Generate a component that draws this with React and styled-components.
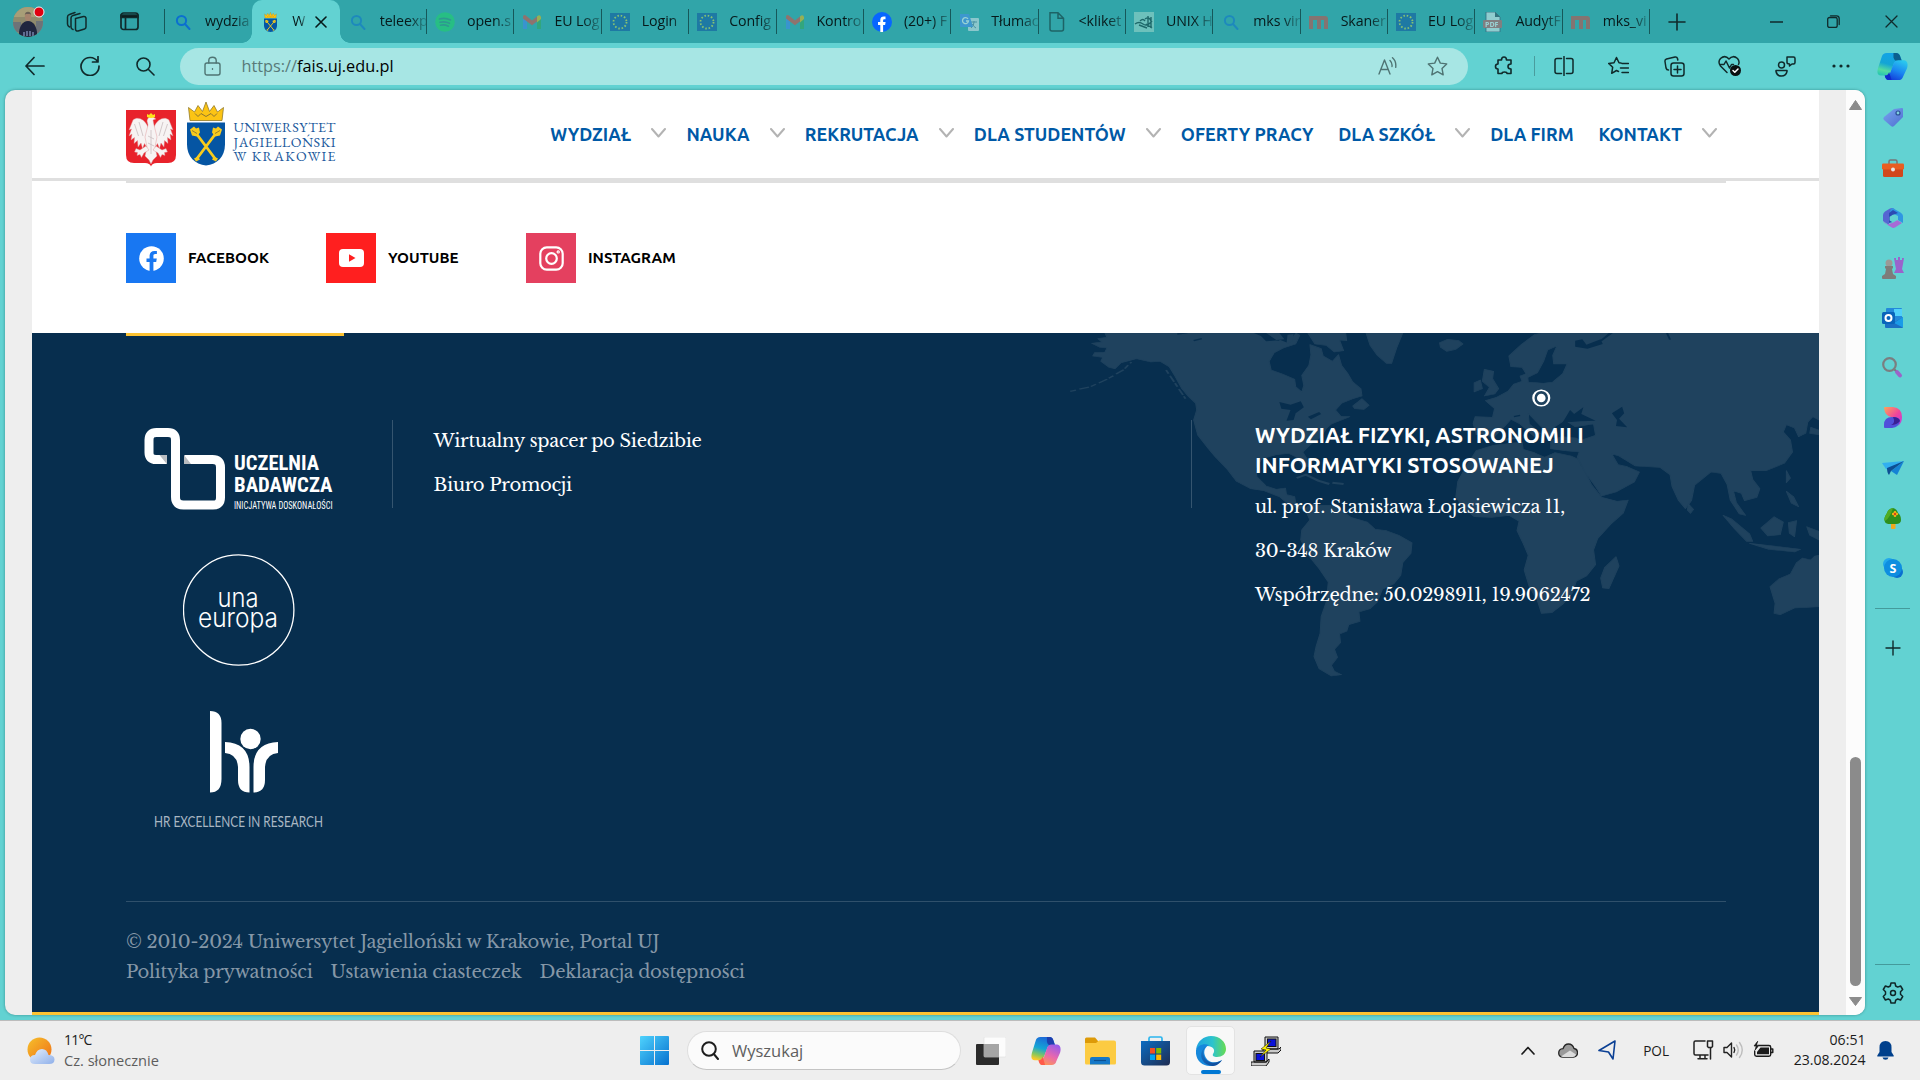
import React from 'react';
import styled, { createGlobalStyle, css } from 'styled-components';

const ui = '"Open Sans", "Noto Sans", sans-serif';
const brand = 'Ubuntu, "Open Sans", "Noto Sans", sans-serif';
const serif = '"Libre Baskerville", "Noto Serif", "Liberation Serif", serif';

const Global = createGlobalStyle`
  * { box-sizing: border-box; }
  body { margin: 0; background: #62d2d2; overflow: hidden; font-family: ${ui}; }
  svg { display: block; flex: none; }
`;

const Screen = styled.div`
  width: 1920px;
  height: 1080px;
  display: flex;
  flex-direction: column;
  overflow: hidden;
  background: #62d2d2;
`;

/* ---------- window title strip ---------- */
const TabStrip = styled.div`
  height: 43px;
  flex: none;
  display: flex;
  background: #31a5a9;
`;
const StripTools = styled.div`
  width: 165px;
  display: flex;
  align-items: center;
  padding-left: 13px;
`;
const StripIcon = styled.div`
  margin-left: ${(p) => p.$gap}px;
`;
const Tabs = styled.div`
  width: 1485px;
  display: flex;
`;
const Tab = styled.div`
  flex: 1 1 0;
  min-width: 0;
  display: flex;
  align-items: center;
  padding-left: 8px;
  position: relative;
  color: #07191a;
  background: ${(p) => (p.$active ? '#62d2d2' : 'transparent')};
  border-radius: 10px 10px 0 0;
  ${(p) =>
    p.$active &&
    css`
      &::before,
      &::after {
        content: '';
        position: absolute;
        bottom: 0;
        width: 10px;
        height: 10px;
      }
      &::before {
        left: -10px;
        background: radial-gradient(circle at 0 0, transparent 9.5px, #62d2d2 10px);
      }
      &::after {
        right: -10px;
        background: radial-gradient(circle at 100% 0, transparent 9.5px, #62d2d2 10px);
      }
    `}
`;
const Fav = styled.div`
  width: 20px;
  height: 20px;
  flex: none;
  display: flex;
  justify-content: center;
  opacity: ${(p) => (p.$asleep ? 0.5 : 1)};
`;
const TabTitle = styled.span`
  flex: 1;
  min-width: 0;
  margin: -2px 0 0 12px;
  font-size: 14.2px;
  line-height: 25px;
  white-space: nowrap;
  letter-spacing: -0.1px;
  mask-image: linear-gradient(to right, #000 60%, rgba(0, 0, 0, 0.2) 100%);
  ${(p) => p.$short && css`flex: none; width: 14px;`}
`;
const TabLine = styled.i`
  width: 1px;
  height: 25px;
  flex: none;
  background: ${(p) => (p.$hidden ? 'transparent' : '#16585a')};
`;
const CloseTab = styled.div`
  margin-left: 8.5px;
`;
const WindowTools = styled.div`
  flex: 1;
  display: flex;
  align-items: center;
  padding-left: 18px;
`;

/* ---------- address bar ---------- */
const Toolbar = styled.div`
  height: 47px;
  flex: none;
  display: flex;
  align-items: center;
  padding: 0 0 1px 7px;
`;
const Slot = styled.div`
  width: ${(p) => p.$w || 55.4}px;
  flex: none;
  display: flex;
  justify-content: center;
  align-items: center;
`;
const Address = styled.div`
  width: 1288px;
  flex: none;
  height: 37px;
  margin: 0 8.5px 0 7px;
  border-radius: 19px;
  background: #a7e6e4;
  display: flex;
  align-items: center;
  padding: 0 20px 0 24px;
`;
const Url = styled.div`
  flex: 1;
  margin: 0 0 0 20.5px;
  font-size: 16.3px;
  color: #000;
  span { color: #587a79; }
`;
const ReadAloud = styled.div`
  margin-right: 30px;
`;
const ToolLine = styled.i`
  width: 1px;
  height: 20px;
  margin: 0 1px 0 2px;
  flex: none;
  background: #4a9c9d;
`;

/* ---------- main area ---------- */
const Main = styled.div`
  height: 930px;
  flex: none;
  display: flex;
  padding-left: 5px;
`;
const Viewport = styled.div`
  width: 1860px;
  height: 925px;
  display: flex;
  border-radius: 10px;
  overflow: hidden;
  background: #eee;
  box-shadow: 0 0 3px rgba(0, 60, 60, 0.45);
`;
const Site = styled.div`
  width: 1787px;
  margin: 0 27px;
  display: flex;
  flex-direction: column;
  background: #fff;
`;
const ScrollTrack = styled.div`
  width: 19px;
  background: #fcfcfc;
  display: flex;
  flex-direction: column;
  align-items: center;
  padding: 10px 0 9px;
`;
const ScrollThumb = styled.div`
  width: 11px;
  height: 229px;
  margin: 647px 0 11px;
  border-radius: 6px;
  background: #8b8b8b;
`;

const SiteHeader = styled.header`
  height: 91px;
  flex: none;
  display: flex;
  justify-content: space-between;
  padding: 0 102px 0 94px;
  border-bottom: 3px solid #dfdfdf;
`;
const SiteLogo = styled.div`
  padding-top: 10px;
`;
const Nav = styled.nav`
  display: flex;
  align-items: center;
  gap: 20.2px;
  padding-bottom: 1px;
`;
const NavItem = styled.a`
  display: flex;
  align-items: center;
  gap: 20px;
  padding-right: ${(p) => (p.$plain ? 4.5 : 0)}px;
  font: 700 17.93px/24px ${brand};
  color: #0059a6;
  svg { margin-top: -2px; }
`;
const Socials = styled.section`
  height: 152px;
  flex: none;
  width: 1600px;
  margin-left: 94px;
  border-top: 2px solid #dfdfdf;
  display: flex;
  padding-top: 50px;
`;
const Social = styled.a`
  width: 200px;
  height: 50px;
  display: flex;
  align-items: center;
  gap: 12px;
  font: 700 15.2px/20px ${brand};
  color: #000;
`;
const SocialTile = styled.span`
  width: 50px;
  height: 50px;
  display: flex;
  align-items: center;
  justify-content: center;
  background: ${(p) => p.$bg};
`;

const Footer = styled.footer`
  flex: 1;
  position: relative;
  background: #072e4e;
  border-bottom: 3px solid #fcc332;
`;
const MapLayer = styled.div`
  position: absolute;
  right: 0;
  top: 0;
`;
const Accent = styled.div`
  width: 218px;
  height: 3px;
  margin-left: 94px;
  background: #fcc332;
`;
const FooterGrid = styled.div`
  position: relative;
  height: 566px;
  margin: 0 93px 0 94px;
  padding-top: 84px;
  display: grid;
  grid-template-columns: 266px 799px 1fr;
  align-items: start;
  border-bottom: 1px solid #2f506b;
`;
const Badges = styled.div`
  width: 225px;
  padding-top: 8px;
  display: flex;
  flex-direction: column;
  align-items: center;
  gap: 44px;
`;
const FooterColumn = styled.div`
  height: 88px;
  border-left: 1px solid #35556f;
  padding: ${(p) => p.$pad};
`;
const FooterLine = styled.p`
  margin: 0 0 14px;
  font: 400 18px/30px ${serif};
  letter-spacing: -0.27px;
  white-space: nowrap;
  color: #fff;
`;
const FooterTitle = styled.h3`
  margin: 0 0 12px;
  font: 700 21.65px/30px ${brand};
  white-space: nowrap;
  color: #fff;
`;
const Legal = styled.div`
  position: relative;
  padding: 25px 0 0 94px;
`;
const LegalRow = styled.div`
  display: flex;
  gap: 18px;
`;
const LegalText = styled.span`
  font: 400 18px/30px ${serif};
  letter-spacing: -0.28px;
  white-space: nowrap;
  color: #8597a7;
`;

/* ---------- edge sidebar ---------- */
const SideBar = styled.aside`
  width: 55px;
  height: 930px;
  display: flex;
  flex-direction: column;
  align-items: center;
  padding: 3px 0 16px;
`;
const SideSlot = styled.div`
  height: 50px;
  display: flex;
  align-items: center;
`;
const SideLine = styled.i`
  width: 35px;
  height: 1px;
  margin: ${(p) => p.$m};
  background: #449a9b;
`;

/* ---------- taskbar ---------- */
const TaskBar = styled.div`
  height: 60px;
  flex: none;
  display: flex;
  align-items: center;
  background: #eee;
  border-top: 1px solid #bcbcbc;
`;
const Weather = styled.div`
  width: 640px;
  padding: 0 0 0 27px;
  display: flex;
  align-items: center;
  gap: 9px;
`;
const WeatherText = styled.div`
  margin-top: -2px;
  font-size: 14.6px;
  line-height: 20px;
  color: #5d5d5d;
  b { display: block; font-weight: 400; font-size: 14px; letter-spacing: -0.8px; color: #1b1b1b; }
`;
const SearchPill = styled.div`
  width: 274px;
  height: 39px;
  margin: 0 2px 0 18px;
  padding-left: 13px;
  display: flex;
  align-items: center;
  gap: 13px;
  border-radius: 20px;
  border: 1px solid #dedede;
  border-bottom-color: #c4c4c4;
  background: #fbfbfb;
  font-size: 16.5px;
  color: #5f5f5f;
`;
const TaskSlot = styled.div`
  width: 55px;
  height: 59px;
  display: flex;
  align-items: center;
  justify-content: center;
`;
const TaskTile = styled.div`
  width: 49px;
  height: 49px;
  padding-top: 9px;
  display: flex;
  flex-direction: column;
  align-items: center;
  justify-content: space-between;
  border-radius: 5px;
  border: 1px solid #e3e3e3;
  background: #f8f8f8;
`;
const TaskMark = styled.i`
  width: 20px;
  height: 4px;
  border-radius: 2px;
  background: #0078d4;
`;
const Tray = styled.div`
  margin-left: auto;
  padding-right: 26px;
  display: flex;
  align-items: center;
`;
const TrayItem = styled.div`
  margin: -1px 0 0 ${(p) => p.$gap}px;
  font-size: 13.6px;
  color: #1b1b1b;
`;
const Clock = styled.div`
  margin: -2px 0 0 20px;
  width: 72px;
  text-align: right;
  font-size: 14.1px;
  line-height: 20px;
  color: #1b1b1b;
`;

/* ---------- generic line icon ---------- */
const Ico = ({ w = 20, h = w, vb = `0 0 ${w} ${h}`, sw = 1.4, c = '#102a2b', children }) => (
  <svg width={w} height={h} viewBox={vb} fill="none" stroke={c} strokeWidth={sw} strokeLinecap="round" strokeLinejoin="round">
    {children}
  </svg>
);

const Avatar = () => (
  <svg width="32" height="32" viewBox="0 0 32 32">
    <defs><clipPath id="av"><circle cx="15" cy="16" r="15" /></clipPath></defs>
    <g clipPath="url(#av)">
      <rect width="32" height="32" fill="#8f8a6d" />
      <rect width="32" height="11" fill="#a79e78" />
      <path d="M0 16h8v10H0zM23 15h9v12h-9z" fill="#6d7378" />
      <path d="M6 32c-1-10 3-17 9-17s10 7 9 17z" fill="#20263f" />
      <ellipse cx="15" cy="10.500" rx="3.200" ry="4.600" fill="#a5836d" />
      <path d="M11.800 9c0-4.500 6.400-4.500 6.400 0l-1-1h-4.400z" fill="#6b6056" />
      <path d="M11 26v4M14 25v5M17 25v5M20 26v4" stroke="#8d9cc8" strokeWidth="1.200" fill="none" />
    </g>
    <circle cx="26" cy="6" r="5" fill="#e00010" stroke="#e8f4f4" strokeWidth="1" />
  </svg>
);

const CrestArt = () => (
  <g>
    <path d="M3 19L1.500 6l6 4.500L11 4l4.500 6L19 .5 22.500 10 27 4l3.500 6.500 6-4.500L35 19z" fill="#fcc414" stroke="#927a2a" strokeWidth=".8" />
    <path d="M8 12l3 3 3-3 5 3 5-3 3 3 3-3" fill="none" stroke="#8e7630" strokeWidth="1" />
    <path d="M0 21h38v22c0 12-8 20-19 21C8 63 0 55 0 43z" fill="#0555a3" />
    <path d="M10 33l18 24M28 33L10 57" stroke="#f8cb1c" strokeWidth="2.800" />
    <path d="M3 28l4-3 2 2 3-1 1 5-3 4-5-1zM35 28l-4-3-2 2-3-1-1 5 3 4 5-1zM7 57l4-2 2 3-4 2zM31 57l-4-2-2 3 4 2z" fill="#f8cb1c" />
    <path d="M5 29l5 3M33 29l-5 3" stroke="#8e7630" strokeWidth=".9" />
  </g>
);
const Crest = ({ w, h }) => (
  <svg width={w} height={h} viewBox="0 0 38 64" preserveAspectRatio="none"><CrestArt /></svg>
);

const UniversityLogo = () => (
  <svg width="212" height="68" viewBox="0 0 212 68">
    <path d="M0 10h50v45q0 8-8 8h-11q-5 0-6 3.500Q24 63 19 63H8q-8 0-8-8z" fill="#e8222b" />
    <g fill="#f7f3f3" stroke="#dc8a8e" strokeWidth=".4">
      <path d="M22 27C18 18 11 16.500 7 20L3 30l2.500-1L3 36l3-2-1 6 3.500-2.500-.5 6 3.500-3L12 47l3-4 1.500 5.500 2-5 2 3.500 2.500-6zM28 27c4-9 11-10.500 15-7l4 10-2.500-1 2.500 7-3-2 1 6-3.500-2.500.5 6-3.500-3L38 47l-3-4-1.500 5.500-2-5-2 3.500-2.500-6z" />
      <path d="M21 21q1-5 6-4l3 2-3 1 1 5 3 12-2 10 2 9-4 4-2 4-2-4-4-4 2-9-2-10 3-12z" />
      <path d="M20 46l-6 4-4-1.500-1.500 3.500 3 .5-.5 3 3-1 1.500 3 2.500-4.500 5-3zM30 46l6 4 4-1.500 1.500 3.500-3 .5.500 3-3-1-1.500 3-2.500-4.500-5-3z" />
    </g>
    <path d="M21 17v-3l2 1 2-2 2 2 2-1v3q-4 2-8 0z" fill="#fde21b" />
    <path d="M8.500 24l4 12M13 22l4 14M41.500 24l-4 12M37 22l-4 14M25 30v24M22 36l6 3M22 43l6 3" stroke="#c9bcbf" strokeWidth=".8" fill="none" />
    <g transform="translate(61 1.500)"><CrestArt /></g>
    <g fill="#21599c" fontFamily='"EB Garamond", "Liberation Serif", serif' fontSize="14">
      <text x="107.500" y="31.700" textLength="102" lengthAdjust="spacing">UNIWERSYTET</text>
      <text x="107.500" y="46.700" textLength="102" lengthAdjust="spacing">JAGIELLOŃSKI</text>
      <text x="107.500" y="61" textLength="102" lengthAdjust="spacing">W KRAKOWIE</text>
    </g>
  </svg>
);

/* ---------- favicons ---------- */
const glyphs = {
  search: <g fill="none" stroke="#0b6fd0" strokeWidth="2"><circle cx="8.500" cy="8.500" r="4.600" /><path d="M12 12l4.500 5" strokeLinecap="round" /></g>,
  spotify: <g><circle cx="10" cy="10" r="9.800" fill="#1ed760" /><path d="M4.500 7q6-1.600 11 1M5 10.300q5-1.300 9.500 1M5.500 13.200q4-1 8 1" fill="none" stroke="#2b8f78" strokeWidth="1.600" strokeLinecap="round" /></g>,
  gmail: <g><path d="M1 4v13h4V9z" fill="#4285f4" /><path d="M19 4v13h-4V9z" fill="#34a853" /><path d="M1 4.500Q2 2 4.500 4L10 8.500 15.500 4v5L10 13.300 1 6.500z" fill="#ea4335" /><path d="M15 4.500Q18 2 19 5v2l-4 3.500z" fill="#fbbc04" /></g>,
  eu: <g><rect y="1" width="20" height="18" fill="#0c4fa0" /><circle cx="10" cy="10" r="6.500" fill="none" stroke="#dce03c" strokeWidth="1.800" strokeDasharray="1.500 1.900" /></g>,
  facebook: <g><circle cx="10" cy="10" r="10" fill="#0866ff" /><path d="M8.300 20v-7H6v-3h2.300V8c0-3 2-4 5.200-3.400v2.600c-1.800-.2-2.400.2-2.400 1.400V10h2.500l-.5 3h-2v7z" fill="#fff" /></g>,
  translate: <g><rect x="9" y="6" width="11" height="13" rx="1" fill="#e4eaf0" /><path d="M12 10h6M15 9v1q0 4-3 6M13 12q2 3 4 4" stroke="#62809b" fill="none" /><path d="M1 2h9l4 13H2q-1 0-1-1z" fill="#4a8af4" /><path d="M9 7a3 3 0 1 0 .5 2H7" stroke="#fff" strokeWidth="1.300" fill="none" /></g>,
  file: <path d="M3 .8h8l5.500 5.500v10.700q0 2-2 2H5q-2 0-2-2zM11 .8v5.500h5.500" fill="none" stroke="#0b2425" strokeWidth="1.500" />,
  unix: <g><rect width="20" height="20" fill="#a9ddd0" /><path d="M1 12q4-3 8 0t9-3M6 9q3-3 5 0M11 7q4-3 6 2M12 12l6 4M5 13l8 3M14 4v11M17 5v11" stroke="#0b2d2c" strokeWidth="1.400" fill="none" /></g>,
  mks: <path d="M0 17V4h16q3 0 3 3v10h-4V8h-3v9H8V8H4v9z" fill="#d6453a" />,
  pdf: <g><path d="M3 0h9l5 5v15H3z" fill="#eef6f5" stroke="#335" strokeWidth=".8" /><path d="M12 0v5h5z" fill="#345" /><rect x="0" y="8" width="19" height="8" rx="1" fill="#d05a5a" /><text x="2" y="14.500" fontFamily={ui} fontSize="7" fontWeight="700" fill="#fff">PDF</text></g>,
};
const Favicon = ({ kind }) =>
  kind === 'uj' ? <Crest w={13} h={20} /> : <svg width="20" height="20" viewBox="0 0 20 20">{glyphs[kind]}</svg>;

const tabs = [
  ['search', 'wydzia'], ['uj', 'W'], ['search', 'teleexp'], ['spotify', 'open.s'], ['gmail', 'EU Log'],
  ['eu', 'Login'], ['eu', 'Config'], ['gmail', 'Kontro'], ['facebook', '(20+) F'], ['translate', 'Tłumac'],
  ['file', '<kliket'], ['unix', 'UNIX H'], ['search', 'mks vir'], ['mks', 'Skaner'], ['eu', 'EU Log'],
  ['pdf', 'AudytF'], ['mks', 'mks_vi'],
];

/* ---------- copilot ribbons ---------- */
const Copilot = ({ id, w, h, warm }) => (
  <svg width={w} height={h} viewBox="0 0 32 30" preserveAspectRatio="none">
    <defs>
      <linearGradient id={`${id}a`} x1=".6" y1="0" x2=".3" y2="1">
        <stop offset="0" stopColor={warm ? '#1d66d8' : '#13a3e8'} /><stop offset=".5" stopColor="#14a5d5" /><stop offset=".8" stopColor={warm ? '#8cc85a' : '#54dba0'} /><stop offset="1" stopColor={warm ? '#ffc928' : '#2bc8b0'} />
      </linearGradient>
      <linearGradient id={`${id}b`} x1=".7" y1="0" x2=".2" y2="1">
        <stop offset="0" stopColor={warm ? '#9a5be8' : '#2ac7ee'} /><stop offset=".5" stopColor={warm ? '#e868ae' : '#1a86f2'} /><stop offset="1" stopColor={warm ? '#ff9a4d' : '#1236d6'} />
      </linearGradient>
    </defs>
    <path d="M10 0h10q3 0 4 4l2 5h-5q-3 0-4 4l-3 8q-2 4-5 4H4q-5 0-3-8L5 4q1-4 5-4z" fill={`url(#${id}a)`} />
    <path d="M17 0h3q3 0 4 4l1.500 5H21q-3 0-4-4z" fill={warm ? '#1d3fae' : '#0b5f8e'} />
    <path d="M22 30H12q-3 0-4-5h3q2-1 3-4l3-9q1-4 5-4h6q5 1 3 9l-4 9q-1 4-5 4z" fill={`url(#${id}b)`} />
    <path d="M12.500 21q-1 4-4.500 4 1 5 4 5h3z" fill={warm ? '#ff5a4a' : '#0f2bcc'} />
  </svg>
);

/* ---------- sidebar pictures ---------- */
const side = {
  tag: <g><defs><linearGradient id="tg" x1="0" x2="1" y2="1"><stop stopColor="#78a4f0" /><stop offset="1" stopColor="#4f6fd0" /></linearGradient></defs><path d="M12 2l8-1q1 0 1 1v8l-9 9q-1.500 1.500-3 0L2 13q-1.500-1.500 0-3z" fill="url(#tg)" /><circle cx="16" cy="6" r="2" fill="#7fd0dd" stroke="#2c4f95" strokeWidth="1.200" /></g>,
  toolbox: <g><path d="M7 7V4.500Q7 3 8.500 3h5Q15 3 15 4.500V7" fill="none" stroke="#747678" strokeWidth="1.500" /><path d="M1 12h20v6.500q0 1.500-1.500 1.500h-17Q1 20 1 18.500z" fill="#d1471c" /><rect x="0" y="6.500" width="22" height="6" rx="1.200" fill="#e85e22" /><circle cx="11" cy="12.500" r="2" fill="#e9e4e4" /></g>,
  m365: <g><path d="M8 1.500L3 4.500Q1 6 1 8v6l6 4V8l2-4 4-1.500Q11 0 8 1.500z" fill="#5566d2" /><path d="M10.500 1l8 4.500Q21 7 21 9v7l-5-3V9l-8-4q0-3 2.500-4z" fill="#2f96e2" /><path d="M1 14q1 2 3 3l5 3q2 1.500 4 .5l7-4.500-5-3-5 3-5 1.500z" fill="#a86ad6" /><path d="M7 6v10l3.500-1V8l5.500-2-5-3z" fill="#2b4bb4" /><path d="M11 7.800l3.600 2v3.600L11 15.400l-3.400-2V9.800z" fill="#62d2d2" /></g>,
  chess: <g><path d="M12 1h2v2h2V0h2v3h2V1h2l-1 6-1 5 2 4H12l2-4-1-5z" fill="#9a63cc" /><circle cx="7" cy="6" r="3.500" fill="#9b9996" /><path d="M3 9h8v2l-1 1 1 5 3 2v2q0 1-1 1H1q-1 0-1-1v-2l3-2 1-5-1-1z" fill="#7e7c7a" /></g>,
  outlook: <g><rect x="4" y="1" width="16" height="14" rx="1" fill="#2389da" /><path d="M12 2h8v7h-8z" fill="#50d0fa" /><path d="M3 12l8 4 10-6v10q0 1-1 1H4q-1 0-1-1z" fill="#1a6fc4" /><path d="M12 16l9 4.500V10z" fill="#1a9be8" /><rect x="0" y="5" width="13" height="12" rx="1.500" fill="#0964bb" /><circle cx="6.500" cy="11" r="3" fill="none" stroke="#fff" strokeWidth="2" /></g>,
  search: <g><circle cx="7.500" cy="7.500" r="6.300" fill="none" stroke="#7b7e80" strokeWidth="2.200" /><path d="M12.500 12.500l2 2" stroke="#777" strokeWidth="2" /><path d="M15 15l3 3.500" stroke="#9a64c8" strokeWidth="4" strokeLinecap="round" /></g>,
  designer: <g><defs><linearGradient id="dz" x1="0" x2="1" y2="1"><stop stopColor="#ffa557" /><stop offset=".55" stopColor="#f0449c" /><stop offset="1" stopColor="#b83be8" /></linearGradient></defs><path d="M2 1q0-1 1-1h8q9 1 9 10 0 6-4 9 2-5-2-8-2-1-5-1-6-1-7-9z" fill="url(#dz)" /><path d="M2 18q0-8 8-8t8 4q-1 6-8 7H3q-1 0-1-1z" fill="#5050da" /><path d="M11 10q6 0 7 4-3 4-9 4 5-2 2-8z" fill="#3b1f94" /></g>,
  send: <g><path d="M0 6l22-2-14 9-4-1z" fill="#32aff0" /><path d="M22 4l-7 14-6-4z" fill="#1583d5" /><path d="M5 11l17-7L9 14l-2 4q-2-2-2-7z" fill="#0d4f94" /></g>,
  tree: <g><rect x="9" y="16" width="4.500" height="6" rx="1" fill="#f3a81c" /><path d="M11 1Q6 2 5 6q-4 6-2 9 1 2 5 2h6q5 0 5-4 0-5-3-7-1-4-5-5z" fill="#2e8f1c" /><path d="M11 1Q6 2 5 6q-4 6-2 8 5-3 8-13z" fill="#51ac22" /><g fill="#f7b416"><circle cx="13" cy="5.200" r="1.300" /><circle cx="13" cy="8.800" r="1.300" /><circle cx="11.200" cy="7" r="1.300" /><circle cx="14.800" cy="7" r="1.300" /></g><circle cx="13" cy="7" r="1.200" fill="#d8431a" /></g>,
  skype: <g><circle cx="7" cy="7" r="6" fill="#21a8ec" /><circle cx="15" cy="15" r="6" fill="#0a6fd0" /><circle cx="11" cy="11" r="9" fill="#0e8ee0" /><text x="11" y="15.500" textAnchor="middle" fontFamily={ui} fontWeight="700" fontSize="12.500" fill="#fff">S</text></g>,
};

const Gear = () => (
  <Ico w={22} vb="0 0 22 22" c="#0f2728" sw={1.5}>
    <path d="M9 1h4l.7 3 2 1.100L18.600 4l2.100 3.500L18.500 9.700v2.600l2.200 2.200L18.600 18l-2.900-1-2 1.200L13 21H9l-.7-2.800-2-1.200-2.900 1-2.100-3.500 2.200-2.200V9.700L1.300 7.500 3.400 4l2.900 1 2-1z" />
    <circle cx="11" cy="11" r="2.500" />
  </Ico>
);

/* ---------- world map ---------- */
const WorldMap = () => (
  <svg width="759" height="357" viewBox="0 39 1488 1071" preserveAspectRatio="none">
    <g fill="#1f425e" stroke="#1f425e" strokeWidth="2" strokeLinejoin="round">
      <path d="M88 39L92 52 74 56 82 66 62 70 78 82 92 84 88 96 68 98 64 108 84 112 80 124 96 142 108 146 120 128 150 116 178 126 196 124 214 140 226 170 238 204 252 230 266 250 268 270 262 300 270 345 290 384 304 410 328 448 346 484 374 506 400 512 430 530 444 548 468 566 480 562 462 548 460 530 444 524 442 504 424 508 404 498 386 470 384 444 396 416 424 404 448 400 464 412 474 436 488 440 484 416 476 396 492 372 512 350 522 326 532 312 552 300 568 290 550 288 540 270 552 250 574 236 592 228 590 206 574 186 564 160 552 136 546 104 534 124 516 108 512 86 490 74 492 104 488 136 474 166 478 196 474 216 462 200 460 178 436 162 414 150 410 124 420 98 438 84 462 72 470 46 462 39z" />
      <path d="M486 39L560 39 562 62 548 60 556 92 538 96 522 76 500 72zM600 39L672 39 660 84 650 130 640 130 622 106 608 76zM744 68L760 58 782 62 790 72 776 88 758 94 746 82zM574 258L592 236 606 256 596 268 578 266z" />
      <path d="M476 572L492 552 510 556 530 556 548 566 570 592 602 606 618 628 640 632 664 646 690 668 688 700 672 728 668 766 654 792 632 808 622 846 608 866 586 876 588 904 566 914 562 934 548 942 550 968 538 988 544 1012 532 1036 538 1054 552 1064 532 1068 508 1046 498 1010 502 980 510 940 512 890 522 846 526 786 508 746 490 712 472 660 474 630 490 600 484 580z" />
      <path d="M816 392L850 376 906 366 908 388 930 398 950 412 970 398 1002 408 1016 418 1030 456 1042 494 1062 532 1092 544 1114 540 1104 580 1080 612 1054 656 1046 690 1050 734 1032 768 1012 784 1004 820 986 852 964 878 944 880 936 842 920 800 910 750 918 706 908 670 896 632 900 604 880 586 846 592 812 590 790 562 776 530 780 484 796 440z" />
      <path d="M1090 710L1096 738 1076 806 1064 804 1060 774 1068 742z" />
      <path d="M816 344L810 310 814 290 848 292 852 266 834 242 856 232 878 214 890 192 906 184 902 168 916 160 918 186 948 190 966 186 986 160 994 132 968 132 966 106 974 78 956 90 948 124 936 158 918 172 906 142 884 140 880 108 904 74 930 44 944 39 1488 39 1488 300 1476 290 1466 306 1462 340 1448 350 1440 324 1424 314 1418 336 1432 360 1436 396 1420 430 1384 452 1354 452 1358 478 1372 506 1366 532 1342 542 1336 520 1320 512 1326 548 1344 586 1332 582 1314 540 1308 494 1296 460 1276 456 1244 496 1238 542 1226 566 1212 540 1200 500 1196 464 1176 442 1128 438 1096 408 1082 402 1094 434 1112 440 1136 456 1126 486 1090 516 1062 528 1050 500 1030 458 1014 412 1018 396 990 392 962 386 962 362 984 350 1012 354 1020 362 1050 346 1046 312 1010 320 990 300 970 320 972 352 958 350 946 324 918 280 920 312 942 340 930 350 902 312 884 298 872 318 852 350z" />
      <path d="M832 148L850 154 848 176 860 206 852 222 832 228 842 202 828 184zM812 188L824 180 828 206 812 216zM1392 800L1410 776 1432 762 1444 728 1456 714 1472 720 1480 708 1488 706V860L1464 862 1440 864 1412 884 1400 880 1402 850zM1300 586L1316 596 1352 642 1358 664 1346 664 1322 626zM1352 670L1400 678 1452 688 1440 696 1390 688zM1374 624L1400 590 1418 606 1412 644 1388 648zM1428 608L1444 602 1440 650 1430 640zM1464 620L1488 634V660L1470 646zM1424 452L1432 474 1424 488zM1424 514L1438 530 1448 560 1434 550zM1472 322L1488 330V344L1470 340zM1232 552L1242 568 1236 580 1230 570z" />
    </g>
    <path d="M20 214L60 200 92 178 124 150 140 126M208 150L246 236" fill="none" stroke="#1f425e" strokeWidth="4" strokeDasharray="12 7 20 4" />
    <path d="M464 474L482 464 506 482 528 492M534 488L556 492M862 362L900 352" fill="none" stroke="#1f425e" strokeWidth="6" />
    <g fill="#072e4e">
      <path d="M986 306L1000 270 1008 282 1026 262 1022 282 1050 302 1020 304 1002 306zM1082 280L1102 260 1106 280 1096 296 1112 322 1090 318 1092 300zM430 246L452 254 472 244 478 262 462 280 458 300 444 302 452 270 434 266zM486 290L508 276 512 282 492 298zM1010 62L1024 58 1032 74 1060 58 1064 72 1034 86 1010 80zM1076 39L1084 39 1062 64 1052 70zM380 39L462 39 446 68 432 60 404 64 394 48z" />
      <path d="M262 62l16-6M230 42l20-4M1190 39l6 20M410 54l20 6M890 290l12-4" stroke="#072e4e" strokeWidth="4" />
    </g>
    <path d="M404 39L430 39 440 58 424 60zM446 44L458 42 456 64 444 72z" fill="#1f425e" />
    <ellipse cx="943.500" cy="234" rx="15.500" ry="23.500" fill="#1f425e" stroke="#fff" strokeWidth="4.500" />
    <ellipse cx="943.500" cy="234" rx="8.500" ry="13" fill="#fff" />
  </svg>
);

/* ---------- footer badges ---------- */
const ResearchBadge = () => (
  <svg width="189" height="82" viewBox="0 0 189 82">
    <path d="M22.800 31.500H12q-7 0-7-7V12q0-7.500 7.500-7.500h11.500q7.500 0 7.500 7.500v57q0 8 8 8H69q7.500 0 7.500-7.500V39.500q0-8-8-8H40.500" fill="none" stroke="#fff" strokeWidth="9" />
    <path d="M15.500 27h7.300v9z M40 27l7 9H40z" fill="#b9bcc0" />
    <g fill="#fff" fontFamily='"Roboto Condensed", Roboto, sans-serif'>
      <g fontWeight="700" fontSize="21">
        <text x="90" y="42.300" textLength="85" lengthAdjust="spacingAndGlyphs">UCZELNIA</text>
        <text x="90" y="64" textLength="98.500" lengthAdjust="spacingAndGlyphs">BADAWCZA</text>
      </g>
      <text x="90" y="81" fontSize="10.800" fontWeight="400" textLength="98.500" lengthAdjust="spacingAndGlyphs">INICJATYWA DOSKONAŁOŚCI</text>
    </g>
  </svg>
);
const UnaBadge = () => (
  <svg width="112" height="112" viewBox="0 0 112 112">
    <circle cx="55.700" cy="56" r="55.200" fill="none" stroke="#fff" strokeWidth="1.300" />
    <g fill="#fff" fontFamily='Inter, Roboto, sans-serif' fontWeight="300" fontSize="26">
      <text x="34.500" y="52.500" textLength="41" lengthAdjust="spacingAndGlyphs">una</text>
      <text x="15" y="73" textLength="80" lengthAdjust="spacingAndGlyphs">europa</text>
    </g>
  </svg>
);
const HrBadge = () => (
  <svg width="170" height="118" viewBox="0 0 170 118">
    <path d="M56 1q11.500 0 11.500 12v56q0 13.500-11.500 13.500z" fill="#fff" />
    <circle cx="96.500" cy="29" r="10.200" fill="#fff" />
    <path d="M71 32q24.500 1 24.500 25v25.500q-11.500 0-11.500-12.500V57Q83 44 71 43z" fill="#fff" />
    <path d="M124 32q-24.500 1-24.500 25v25.500q11.500 0 11.500-12.500V57q1-13 13-14z" fill="#fff" />
    <text x="0" y="116.500" fontFamily='Lato, Roboto, sans-serif' fontWeight="400" fontSize="15" fill="#a9b7c3" textLength="169" lengthAdjust="spacingAndGlyphs">HR EXCELLENCE IN RESEARCH</text>
  </svg>
);

const menu = [['WYDZIAŁ', 1], ['NAUKA', 1], ['REKRUTACJA', 1], ['DLA STUDENTÓW', 1], ['OFERTY PRACY', 0], ['DLA SZKÓŁ', 1], ['DLA FIRM', 0], ['KONTAKT', 1]];

const Edge = () => (
  <svg width="30" height="30" viewBox="0 0 30 30">
    <defs>
      <linearGradient id="e1" x1="0" x2="1"><stop stopColor="#1fa3e0" /><stop offset=".55" stopColor="#2cc3ce" /><stop offset="1" stopColor="#68dc50" /></linearGradient>
      <linearGradient id="e2" x1="0" y1="0" x2=".5" y2="1"><stop stopColor="#1580d4" /><stop offset="1" stopColor="#104f9f" /></linearGradient>
    </defs>
    <path d="M0 14C1 5 8 0 15 0c9 0 15 6 15 13 0 5-4 8-9 8-3 0-5-1-4-3 3-4 0-8-6-8-5 0-9 1-11 4z" fill="url(#e1)" />
    <path d="M0 14c2-5 8-7 13-5-4 2-6 6-4 11 3 7 10 8 17 4-4 5-8 6-12 6C5 30-1 23 0 14z" fill="#1688dc" />
    <path d="M13 9c-5 2-7 6-5 11 2 7 11 9 18 4-3 5-7 6-10 6-8-1-13-8-10-15 1-3 4-5 7-6z" fill="url(#e2)" />
  </svg>
);

export default function App() {
  return (
    <Screen>
      <Global />
      <TabStrip>
        <StripTools>
          <Avatar />
          <StripIcon $gap={21}>
            <Ico w={22} sw={1.5}><path d="M9.500 7.500l8-2q2-.4 2.500 1.500v9q0 1.500-1.500 2l-6.500 2q-2 .5-2.500-1.500z" /><path d="M7 18.500q-2-.5-2-2.500V7q0-2 2-2.500L14 2.500M3.500 16Q1.500 15 1.500 13V6q0-2 2-2.500L9 1.500" /></Ico>
          </StripIcon>
          <StripIcon $gap={32}>
            <Ico w={19} sw={1.7}><rect x="1" y="1" width="17" height="16.500" rx="2.500" /><path d="M1 3h17v2.500H1zM5.500 6v11" fill="#0b1b1c" /></Ico>
          </StripIcon>
          <StripIcon $gap={24.5}><TabLine as="div" /></StripIcon>
        </StripTools>
        <Tabs>
          {tabs.map(([kind, title], i) => (
            <Tab key={i} $active={i === 1}>
              <Fav $asleep={i > 1 && kind !== 'facebook'}><Favicon kind={kind} /></Fav>
              <TabTitle $short={i === 1}>{title}</TabTitle>
              {i === 1 ? <CloseTab><Ico w={12} sw={1.6} c="#061a1a"><path d="M1 1l10 10M11 1L1 11" /></Ico></CloseTab> : <TabLine $hidden={i === 0} />}
            </Tab>
          ))}
        </Tabs>
        <WindowTools>
          <Ico w={18} sw={1.6}><path d="M9 1v16M1 9h16" /></Ico>
          <StripIcon $gap={84}><Ico w={13} sw={1.3}><path d="M0 7h13" /></Ico></StripIcon>
          <StripIcon $gap={44}><Ico w={13} sw={1.3}><rect x=".7" y="2.500" width="9.500" height="10" rx="1.800" /><path d="M3.500.8h6q2.700 0 2.700 2.700v6" /></Ico></StripIcon>
          <StripIcon $gap={45}><Ico w={13} sw={1.3}><path d="M1 1l11 11M12 1L1 12" /></Ico></StripIcon>
        </WindowTools>
      </TabStrip>

      <Toolbar>
        <Slot $w={55}><Ico w={20} sw={1.7}><path d="M19 10H1M9 1.500L1 10l8 8.500" /></Ico></Slot>
        <Slot $w={55}><Ico w={20} sw={1.7}><path d="M17.500 5.500A9 9 0 1 0 19 10M18 .5v5.500h-5.500" /></Ico></Slot>
        <Slot $w={56}><Ico w={19} sw={1.6}><circle cx="7.500" cy="7.500" r="6.500" /><path d="M12.500 12.500l5.500 5.500" /></Ico></Slot>
        <Address>
          <Ico w={17} h={20} c="#4f7473" sw={1.4}><rect x="1" y="7" width="15" height="12" rx="2" /><path d="M4.800 7V4.500q0-3.300 3.700-3.300t3.700 3.300V7M8.500 12.800v.5" /></Ico>
          <Url><span>https://</span>fais.uj.edu.pl</Url>
          <ReadAloud>
            <Ico w={19} h={18} c="#4f7473" sw={1.4}><path d="M1 17L6.500 3 12 17M3 12.500h7M12 3.500q2.500 2.300 2 6M14.500.8q4 3.500 3.200 9.500" /></Ico>
          </ReadAloud>
          <Ico w={21} h={20} c="#4f7473" sw={1.4}><path d="M10.500 1.200l2.800 5.900 6.400.8-4.700 4.500 1.200 6.400-5.700-3.100-5.700 3.100L6 12.400 1.300 7.900l6.400-.8z" /></Ico>
        </Address>
        <Slot><Ico w={20} sw={1.6}><path d="M4 4h3.500q0-3 2.500-3t2.500 3H17v4q-3 0-3 2.500t3 2.500v4.500h-4q0-1.500-2.500-1.500T8 17.500H4V13q-2.500 0-2.500-2.500T4 8z" /></Ico></Slot>
        <ToolLine />
        <Slot><Ico w={20} sw={1.5}><path d="M7.500 2.500H3q-2 0-2 2v11q0 2 2 2h4.500M12.500 2.500H17q2 0 2 2v11q0 2-2 2h-4.500M10 .5v19" /></Ico></Slot>
        <Slot><Ico w={21} h={20} sw={1.5}><path d="M13 7l-2-.3L8.500 1.500 6 6.700l-5.300.7 4 3.800-1 6.100L8.500 14.500l2 1M14 7.500h6.500M12.500 12h8M14 16.500h6.500" /></Ico></Slot>
        <Slot><Ico w={21} sw={1.5}><rect x="7" y="7" width="13" height="13" rx="2.500" /><path d="M13.500 10v7M10 13.500h7M4.500 14q-2 0-2.500-2L1 5.500q-.3-2 1.500-2.500L11 1q2-.3 2.500 1.500l.3 1.500" /></Ico></Slot>
        <Slot>
          <Ico w={24} h={22} sw={1.5}><path d="M9 17.500L2.500 11Q-.5 7 2.500 3.500 7-.5 11 4q4-4.500 8.500-.5 2.500 3 1 6M2 9.500h4l2-3.500 3.500 7 2-3.500h2" /><circle cx="17.500" cy="15.500" r="5.500" fill="#0a0f10" stroke="none" /><path d="M15 15.500l1.800 1.800 3.200-3.300" stroke="#fff" /></Ico>
        </Slot>
        <Slot><Ico w={21} h={21} sw={1.5}><circle cx="6.500" cy="9" r="3" /><path d="M1 14.500h11v1q-1 4.500-5.500 4.500T1 15.500zM12 1h6.500q1.500 0 1.500 1.500v4Q20 8 18.500 8H17l-2.500 2V8q-2.500 0-2.500-1.500z" /></Ico></Slot>
        <Slot><Ico w={18} h={4}><g fill="#102a2b" stroke="none"><circle cx="2" cy="2" r="1.600" /><circle cx="9" cy="2" r="1.600" /><circle cx="16" cy="2" r="1.600" /></g></Ico></Slot>
        <Slot $w={49}><Copilot id="ct" w={31} h={27} /></Slot>
      </Toolbar>

      <Main>
        <Viewport>
          <Site>
            <SiteHeader>
              <SiteLogo><UniversityLogo /></SiteLogo>
              <Nav>
                {menu.map(([label, sub]) => (
                  <NavItem key={label} $plain={!sub}>
                    {label}
                    {sub ? <Ico w={15} h={10} c="#b3b3b3" sw={2}><path d="M1 1l6.500 7.500L14 1" /></Ico> : null}
                  </NavItem>
                ))}
              </Nav>
            </SiteHeader>
            <Socials>
              <Social>
                <SocialTile $bg="#1877f2"><svg width="25" height="25" viewBox="0 0 25 25"><circle cx="12.500" cy="12.500" r="12.300" fill="#fff" /><path d="M10.600 25v-9H7.500v-3.600h3.100V9.700c0-3.200 2-4.800 4.800-4.800l2.500.2v3h-1.600c-1.500 0-1.900.8-1.900 1.800v2.500h3.400l-.6 3.600h-2.800v9z" fill="#1877f2" /></svg></SocialTile>
                FACEBOOK
              </Social>
              <Social>
                <SocialTile $bg="#ff1f1f"><svg width="25" height="18" viewBox="0 0 25 18"><rect width="25" height="18" rx="4" fill="#fff" /><path d="M10 5.300v7.400l6.500-3.700z" fill="#ff1f1f" /></svg></SocialTile>
                YOUTUBE
              </Social>
              <Social>
                <SocialTile $bg="#e4405f"><Ico w={25} c="#fff" sw={2.2}><rect x="1.300" y="1.300" width="22.400" height="22.400" rx="6.500" /><circle cx="12.500" cy="12.500" r="5.300" /><circle cx="19.200" cy="5.900" r=".6" /></Ico></SocialTile>
                INSTAGRAM
              </Social>
            </Socials>
            <Footer>
              <MapLayer><WorldMap /></MapLayer>
              <Accent />
              <FooterGrid>
                <Badges><ResearchBadge /><UnaBadge /><HrBadge /></Badges>
                <FooterColumn $pad="6px 0 0 40.500px">
                  <FooterLine>Wirtualny spacer po Siedzibie</FooterLine>
                  <FooterLine>Biuro Promocji</FooterLine>
                </FooterColumn>
                <FooterColumn $pad="0 0 0 63px">
                  <FooterTitle>WYDZIAŁ FIZYKI, ASTRONOMII I<br />INFORMATYKI STOSOWANEJ</FooterTitle>
                  <FooterLine>ul. prof. Stanisława Łojasiewicza 11,</FooterLine>
                  <FooterLine>30-348 Kraków</FooterLine>
                  <FooterLine>Współrzędne: 50.0298911, 19.9062472</FooterLine>
                </FooterColumn>
              </FooterGrid>
              <Legal>
                <LegalRow><LegalText>© 2010-2024 Uniwersytet Jagielloński w Krakowie, Portal UJ</LegalText></LegalRow>
                <LegalRow>
                  <LegalText>Polityka prywatności</LegalText>
                  <LegalText>Ustawienia ciasteczek</LegalText>
                  <LegalText>Deklaracja dostępności</LegalText>
                </LegalRow>
              </Legal>
            </Footer>
          </Site>
          <ScrollTrack>
            <svg width="13" height="10"><path d="M6.500.5L12.500 9.500H.5z" fill="#8b8b8b" stroke="#8b8b8b" strokeLinejoin="round" /></svg>
            <ScrollThumb />
            <svg width="13" height="9"><path d="M6.500 8.500L12.500.5H.5z" fill="#8b8b8b" stroke="#8b8b8b" strokeLinejoin="round" /></svg>
          </ScrollTrack>
        </Viewport>
        <SideBar>
          {Object.keys(side).map((k) => (
            <SideSlot key={k}><svg width="22" height="22" viewBox="0 0 22 22">{side[k]}</svg></SideSlot>
          ))}
          <SideLine $m="15px 0 31px" />
          <Ico w={16} sw={1.4}><path d="M8 1v14M1 8h14" /></Ico>
          <SideLine $m="auto 0 17px" />
          <Gear />
        </SideBar>
      </Main>

      <TaskBar>
        <Weather>
          <svg width="28" height="28" viewBox="0 0 28 28">
            <defs>
              <linearGradient id="sun" x1="0" y1="0" x2="1" y2="1"><stop stopColor="#f6c02c" /><stop offset="1" stopColor="#ef6f16" /></linearGradient>
              <linearGradient id="cl" x1="0" y1="0" x2="1" y2="1"><stop stopColor="#e5effc" /><stop offset="1" stopColor="#8fb0ea" /></linearGradient>
            </defs>
            <circle cx="12.500" cy="12.500" r="12" fill="url(#sun)" />
            <path d="M8 27q-5 0-5-4.500T8 18q2-6 7-6t6.500 6q6 0 6 4.500T22 27z" fill="url(#cl)" />
          </svg>
          <WeatherText><b>11°C</b>Cz. słonecznie</WeatherText>
        </Weather>
        <svg width="29" height="29" viewBox="0 0 29 29">
          <defs><linearGradient id="win" x1="0" y1="0" x2="1" y2="1"><stop stopColor="#4fd3fd" /><stop offset="1" stopColor="#0671cf" /></linearGradient></defs>
          <path d="M1 0h13v14H0V1q0-1 1-1zM15 0h13q1 0 1 1v13H15zM0 15h14v14H1q-1 0-1-1zM15 15h14v13q0 1-1 1H15z" fill="url(#win)" />
        </svg>
        <SearchPill>
          <Ico w={18} h={19} c="#1d1d1d" sw={2}><circle cx="8" cy="8" r="6.800" /><path d="M12.800 13l4.200 5" /></Ico>
          Wyszukaj
        </SearchPill>
        <TaskSlot>
          <svg width="30" height="28" viewBox="0 0 30 28">
            <rect y="7" width="23" height="21" rx="1" fill="#2b2b2b" />
            <rect x="8" width="22" height="20" rx="1" fill="#fdfdfd" fillOpacity=".93" stroke="#ddd" strokeWidth=".6" />
            <rect x="8" y="7" width="15" height="13" fill="#a5a5a5" />
          </svg>
        </TaskSlot>
        <TaskSlot><Copilot id="cb" w={30} h={28} warm /></TaskSlot>
        <TaskSlot>
          <svg width="31" height="28" viewBox="0 0 31 28">
            <path d="M0 2Q0 .5 1.500.5H10L13 4v4H0z" fill="#dd9a08" />
            <path d="M0 6h11l3-2.500h15q2 0 2 2V26q0 1.500-1.500 1.500h-28Q0 27.500 0 26z" fill="#fccb42" />
            <path d="M5 27.500V22q0-2 2-2h16q2 0 2 2v5.500z" fill="#1478c8" />
            <path d="M9 23.500h12" stroke="#0b4f90" strokeWidth="1.200" />
          </svg>
        </TaskSlot>
        <TaskSlot>
          <svg width="29" height="30" viewBox="0 0 29 30">
            <defs><linearGradient id="st" x1="0" y1="0" x2="1" y2="1"><stop stopColor="#0b6cc2" /><stop offset="1" stopColor="#1f2d52" /></linearGradient></defs>
            <path d="M8 6V2.500Q8 1 9.500 1h10Q21 1 21 2.500V6" fill="none" stroke="#2bb5ee" strokeWidth="1.700" />
            <path d="M0 5h29v21q0 3.500-3.500 3.500h-22Q0 29.500 0 26z" fill="url(#st)" />
            <path d="M9 12h5v5.500H9z" fill="#f25022" /><path d="M15.200 12h5v5.500h-5z" fill="#7fba00" /><path d="M9 18.600h5V24H9z" fill="#00a4ef" /><path d="M15.200 18.600h5V24h-5z" fill="#ffb900" />
          </svg>
        </TaskSlot>
        <TaskSlot><TaskTile><Edge /><TaskMark /></TaskTile></TaskSlot>
        <TaskSlot>
          <svg width="30" height="30" viewBox="0 0 30 30" stroke="#111" strokeWidth="1">
            <path d="M14 1h13v12H14zM12 13h16l2-2v3l-3 3H12z" fill="#c9c9c9" /><rect x="16.500" y="3" width="8.500" height="7.500" fill="#0a12d8" />
            <path d="M3 15h13v11H3zM0 26h15l3-3v3l-3 4H0z" fill="#c9c9c9" /><rect x="5" y="17.500" width="8.500" height="7" fill="#0a12d8" />
            <path d="M20 5l-10 8 5 1-6 7 11-8-5-1z" fill="#fff200" strokeWidth=".5" />
          </svg>
        </TaskSlot>
        <Tray>
          <TrayItem $gap={0}><Ico w={14} h={9} c="#1b1b1b" sw={1.7}><path d="M1 8l6-6.500L13 8" /></Ico></TrayItem>
          <TrayItem $gap={23}>
            <Ico w={20} h={15} c="#252525" sw={1.3}><path d="M5 14q-4.300 0-4.300-4T5 5.700Q6.500 1 10.500 1T16 5.500q3.500.5 3.500 4.300T15.500 14z" fill="#9a9a9a" /><path d="M3 13.500L12 7.500l6 4q-1 2.500-3 2.500H5z" fill="#dcdcdc" stroke="none" /></Ico>
          </TrayItem>
          <TrayItem $gap={20}><Ico w={18} h={20} c="#0a3f94" sw={1.6}><path d="M17 1L1 10.500l9.500 1.500L15 19z" /></Ico></TrayItem>
          <TrayItem $gap={27.5}>POL</TrayItem>
          <TrayItem $gap={23.5}><Ico w={21} h={20} c="#222" sw={1.5}><path d="M12 1H2.500Q1 1 1 2.500v11Q1 15 2.500 15H15M5 18.800h9M7 15v3.500M12 15v3.500M14.500 1h5v5.500l-1 1h-3l-1-1zM17.500 8v11" /></Ico></TrayItem>
          <TrayItem $gap={9}><Ico w={21} h={18} c="#222" sw={1.4}><path d="M1 6.500h3L8.500 2v14L4 11.500H1zM11 6.500q1.500 2.500 0 5" /><path d="M13.500 4q3.500 5 0 10M16.500 1.500q5.500 7.500 0 15" stroke="#bdbdbd" /></Ico></TrayItem>
          <TrayItem $gap={9}><Ico w={21} h={18} c="#1b1b1b" sw={1.4}><path d="M6 4.500h10q1.700 0 1.700 1.700v7.300q0 1.700-1.700 1.700H3.500Q1.700 15.200 1.700 13.500V10M18 8h1.800v3.500H18" /><path d="M7.500 6.500H16v6.700H4V11z" fill="#1b1b1b" stroke="none" /><path d="M4.500.5L1 5h2.200L2.200 9 6 4.200H3.700z" fill="#1b1b1b" strokeWidth=".7" /></Ico></TrayItem>
          <Clock>06:51<br />23.08.2024</Clock>
          <TrayItem $gap={11.5}>
            <svg width="17" height="19" viewBox="0 0 17 19"><path d="M8.500 0q6 0 6 6.500v4.500l2.200 3.500v1H.3v-1L2.500 11V6.500Q2.500 0 8.500 0z" fill="#00408c" /><path d="M5.500 16.500h6q-.5 2.300-3 2.300t-3-2.300z" fill="#00408c" /></svg>
          </TrayItem>
        </Tray>
      </TaskBar>
    </Screen>
  );
}
